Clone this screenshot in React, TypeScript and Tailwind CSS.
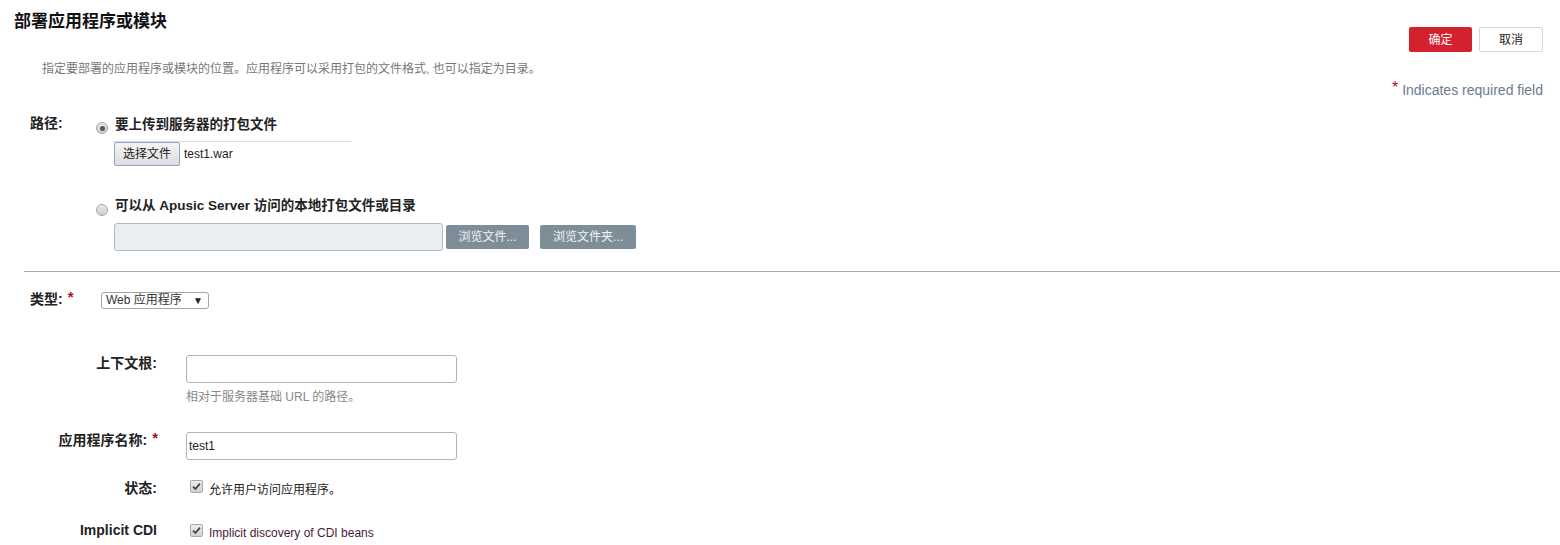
const Radio = ({ checked }: { checked?: boolean }) => (
  <span className="flex h-[12px] w-[12px] items-center justify-center rounded-full border border-[#a6a6a6] bg-gradient-to-b from-[#e8e8e8] to-[#cfcfcf]">
    {checked && <span className="h-[5px] w-[5px] rounded-full bg-[#555]" />}
  </span>
);

const Checkbox = () => (
  <span className="flex h-[13px] w-[13px] items-center justify-center rounded-[2px] border border-[#a9a9a9] bg-gradient-to-b from-[#ededed] to-[#d2d2d2]">
    <svg width="9" height="9" viewBox="0 0 9 9">
      <path d="M1 4.6 L3.4 7 L8 1.6" fill="none" stroke="#444" strokeWidth="1.8" />
    </svg>
  </span>
);

const Req = () => <span className="ml-[5px] align-top text-[15px] leading-[12px] text-[#a8101b]">*</span>;

export default function App() {
  return (
    <div className="h-[545px] w-[1560px] overflow-hidden bg-white font-['Liberation_Sans','Noto_Sans_CJK_SC',sans-serif] text-[#222]">
      {/* header */}
      <div className="flex justify-between">
        <div>
          <h1 className="pl-[14px] pt-[10px] text-[17px] font-bold leading-[24px] text-[#111]">部署应用程序或模块</h1>
          <p className="mt-[27px] pl-[42px] text-[12px] leading-[16px] text-[#777]">
            指定要部署的应用程序或模块的位置。应用程序可以采用打包的文件格式, 也可以指定为目录。
          </p>
        </div>
        <div className="mr-[17px] flex flex-col items-end">
          <div className="mt-[27px] flex gap-[7px]">
            <button className="h-[25px] w-[63px] rounded-[2px] bg-[#d3212d] text-[12px] text-white">确定</button>
            <button className="h-[25px] w-[64px] rounded-[2px] border border-[#d6d6d6] bg-white text-[12px] text-[#222]">取消</button>
          </div>
          <div className="mt-[29px] text-[14px] leading-[18px] text-[#6c7b8f]">
            <span className="mr-[4px] align-top text-[16px] leading-[14px] text-[#a8101b]">*</span>
            Indicates required field
          </div>
        </div>
      </div>

      {/* path */}
      <div className="mt-[16px] flex">
        <div className="w-[96px] pl-[30px] text-[14px] font-bold leading-[16px]">路径:</div>
        <div>
          <div className="flex h-[20px] items-center">
            <span className="mt-[6px]"><Radio checked /></span>
            <span className="ml-[7px] text-[13.5px] font-bold leading-[20px]">要上传到服务器的打包文件</span>
          </div>
          <div className="ml-[17px] mt-[6px] w-[238px] border-t border-[#dcdcdc]" />
          <div className="ml-[18px] flex items-center">
            <button className="h-[24px] w-[66px] rounded-[2px] border border-[#8ea6cf] bg-gradient-to-b from-[#f4f4f4] to-[#dedede] text-[12px] text-[#222]">选择文件</button>
            <span className="ml-[4px] text-[12px] text-[#222]">test1.war</span>
          </div>
          <div className="mt-[30px] flex h-[20px] items-center">
            <span className="mt-[8px]"><Radio /></span>
            <span className="ml-[7px] text-[13.5px] font-bold leading-[20px]">可以从 Apusic Server 访问的本地打包文件或目录</span>
          </div>
          <div className="ml-[18px] mt-[7px] flex items-center">
            <div className="h-[28px] w-[329px] rounded-[3px] border border-[#b5b9bd] bg-[#ebeef1]" />
            <button className="ml-[3px] h-[24px] w-[83px] rounded-[2px] bg-[#7e8e98] text-[12px] text-[#f2f2f2]">浏览文件...</button>
            <button className="ml-[11px] h-[24px] w-[96px] rounded-[2px] bg-[#7e8e98] text-[12px] text-[#f2f2f2]">浏览文件夹...</button>
          </div>
        </div>
      </div>

      <div className="ml-[24px] mt-[20px] border-t border-[#a3a9ad]" />

      {/* type */}
      <div className="mt-[19px] flex items-start">
        <div className="w-[101px] pl-[30px] text-[14px] font-bold leading-[16px]">
          类型:<Req />
        </div>
        <div className="mt-[1px] flex h-[17px] w-[108px] items-center justify-between rounded-[3px] border border-[#a5a5a5] bg-white pl-[4px] pr-[5px] text-[12px] leading-[15px] text-[#333]">
          <span>Web 应用程序</span>
          <span className="text-[10px] leading-[10px] text-[#222]">▼</span>
        </div>
      </div>

      {/* context root */}
      <div className="mt-[46px] flex items-start">
        <div className="w-[158px] pr-[1px] text-right text-[14px] font-bold leading-[16px]">上下文根:</div>
        <div className="ml-[28px]">
          <div className="h-[28px] w-[271px] rounded-[3px] border border-[#b0b4b8] bg-white" />
          <div className="mt-[6px] text-[12px] leading-[16px] text-[#888]">相对于服务器基础 URL 的路径。</div>
        </div>
      </div>

      {/* app name */}
      <div className="mt-[27px] flex items-start">
        <div className="w-[158px] text-right text-[14px] font-bold leading-[16px]">
          应用程序名称:<Req />
        </div>
        <div className="ml-[28px] flex h-[28px] w-[271px] items-center rounded-[3px] border border-[#b0b4b8] bg-white pl-[2px] text-[12px] text-[#222]">
          test1
        </div>
      </div>

      {/* status */}
      <div className="mt-[20px] flex items-start">
        <div className="w-[158px] pr-[1px] text-right text-[14px] font-bold leading-[16px]">状态:</div>
        <div className="ml-[32px] flex items-start">
          <Checkbox />
          <span className="ml-[6px] mt-[2px] text-[12px] leading-[16px] text-[#222]">允许用户访问应用程序。</span>
        </div>
      </div>

      {/* implicit cdi */}
      <div className="mt-[24px] flex items-start">
        <div className="w-[158px] pr-[1px] text-right text-[14px] font-bold leading-[16px]">Implicit CDI</div>
        <div className="ml-[32px] mt-[2px] flex items-start">
          <Checkbox />
          <span className="ml-[6px] mt-[1px] text-[12px] leading-[16px] text-[#4a1a3a]">Implicit discovery of CDI beans</span>
        </div>
      </div>
    </div>
  );
}
